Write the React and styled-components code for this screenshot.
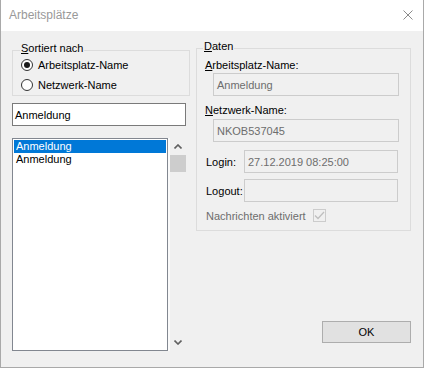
import React from "react";
import styled, { createGlobalStyle } from "styled-components";

const GlobalStyle = createGlobalStyle`
  html, body {
    margin: 0;
    padding: 0;
    background: #ffffff;
  }
  * {
    box-sizing: border-box;
  }
`;

const Window = styled.div`
  width: 424px;
  height: 368px;
  border: 1px solid #a9a9a9;
  border-top: none;
  display: flex;
  flex-direction: column;
  font-family: "Liberation Sans", Arial, sans-serif;
  font-size: 11px;
  color: #000;
`;

const TitleBar = styled.div`
  height: 31px;
  flex: none;
  background: #ffffff;
  display: flex;
  align-items: center;
  justify-content: space-between;
  padding: 0 10px 1px 8px;
  font-size: 12px;
  color: #999999;
`;

const Body = styled.div`
  flex: 1;
  background: #f0f0f0;
  display: flex;
  gap: 6px;
  padding: 0 12px 0 11px;
`;

const LeftColumn = styled.div`
  width: 178px;
  display: flex;
  flex-direction: column;
  padding-top: 19px;
  padding-bottom: 16px;
`;

const RightColumn = styled.div`
  width: 215px;
  display: flex;
  flex-direction: column;
  padding-top: 17px;
`;

const GroupBox = styled.div`
  position: relative;
  border: 1px solid #dcdcdc;
  height: ${(p) => p.$height}px;
`;

const Legend = styled.span`
  position: absolute;
  top: -9px;
  left: ${(p) => p.$left}px;
  line-height: 13px;
  padding: 0 1px;
  background: #f0f0f0;
`;

const Key = styled.span`
  text-decoration: underline;
  text-underline-offset: 1px;
`;

const RadioList = styled.div`
  display: flex;
  flex-direction: column;
  padding: 4px 0 0 8px;
`;

const RadioRow = styled.label`
  display: flex;
  align-items: center;
  height: 20px;
  gap: 5px;
`;

const RadioCircle = styled.span`
  width: 12px;
  height: 12px;
  border-radius: 50%;
  border: 1px solid #333333;
  background: #ffffff;
  display: flex;
  align-items: center;
  justify-content: center;
  &::after {
    content: "";
    width: 6px;
    height: 6px;
    border-radius: 50%;
    background: ${(p) => (p.$checked ? "#1a1a1a" : "transparent")};
  }
`;

const SearchInput = styled.div`
  margin-top: 7px;
  width: 174px;
  height: 23px;
  border: 1px solid #7a7a7a;
  background: #ffffff;
  display: flex;
  align-items: center;
  padding-left: 2px;
`;

const ListArea = styled.div`
  margin-top: 12px;
  width: 174px;
  flex: 1;
  display: flex;
`;

const ListBox = styled.div`
  width: 156px;
  border: 1px solid #828790;
  background: #ffffff;
  padding: 1px;
`;

const ListItem = styled.div`
  height: 13px;
  line-height: 13px;
  padding-left: 2px;
  background: ${(p) => (p.$selected ? "#0078d7" : "transparent")};
  color: ${(p) => (p.$selected ? "#ffffff" : "#000000")};
`;

const ScrollBar = styled.div`
  width: 18px;
  border-left: 2px solid #fafafa;
  background: #f0f0f0;
  display: flex;
  flex-direction: column;
`;

const ScrollArrow = styled.div`
  height: 17px;
  display: flex;
  align-items: center;
  justify-content: center;
`;

const Thumb = styled.div`
  height: 17px;
  background: #cdcdcd;
`;

const Track = styled.div`
  flex: 1;
`;

const DataGroup = styled.div`
  display: flex;
  flex-direction: column;
  padding: 10px 11px 0 8px;
`;

const FieldLabel = styled.div`
  line-height: 13px;
  margin-top: ${(p) => p.$top || 0}px;
`;

const DisabledField = styled.div`
  height: 23px;
  border: 1px solid #cccccc;
  background: #f0f0f0;
  color: #6d6d6d;
  display: flex;
  align-items: center;
  padding-left: 3px;
  margin-top: ${(p) => p.$top || 0}px;
  margin-left: ${(p) => p.$indent || 0}px;
  flex: ${(p) => (p.$grow ? 1 : "none")};
`;

const FieldRow = styled.div`
  display: flex;
  align-items: center;
  margin-top: ${(p) => p.$top}px;
  padding-right: 1px;
`;

const RowLabel = styled.div`
  width: 39px;
  padding-left: 1px;
`;

const CheckRow = styled.div`
  display: flex;
  align-items: center;
  gap: 7px;
  margin-top: 7px;
  padding-left: 1px;
  color: #6d6d6d;
`;

const CheckBox = styled.span`
  width: 13px;
  height: 13px;
  border: 1px solid #cccccc;
  background: #f0f0f0;
  display: flex;
  align-items: center;
  justify-content: center;
`;

const OkButton = styled.button`
  margin-top: auto;
  margin-bottom: 24px;
  align-self: flex-end;
  width: 89px;
  height: 22px;
  border: 1px solid #adadad;
  background: #e1e1e1;
  font-family: "Liberation Sans", Arial, sans-serif;
  font-size: 11px;
  color: #000;
  padding: 0;
`;

function Chevron({ up }) {
  return (
    <svg width="8" height="5" viewBox="0 0 8 5">
      <path
        d={up ? "M0.5 4.5 L4 1 L7.5 4.5" : "M0.5 0.5 L4 4 L7.5 0.5"}
        fill="none"
        stroke="#606060"
        strokeWidth="1.6"
      />
    </svg>
  );
}

export default function App() {
  return (
    <>
      <GlobalStyle />
      <Window>
        <TitleBar>
          <span>Arbeitsplätze</span>
          <svg width="10" height="10" viewBox="0 0 10 10">
            <path d="M0.5 0.5 L9.5 9.5 M9.5 0.5 L0.5 9.5" stroke="#8a8a8a" strokeWidth="1" />
          </svg>
        </TitleBar>
        <Body>
          <LeftColumn>
            <GroupBox $height={46}>
              <Legend $left={7}>
                <Key>S</Key>ortiert nach
              </Legend>
              <RadioList>
                <RadioRow>
                  <RadioCircle $checked />
                  Arbeitsplatz-Name
                </RadioRow>
                <RadioRow>
                  <RadioCircle />
                  Netzwerk-Name
                </RadioRow>
              </RadioList>
            </GroupBox>
            <SearchInput>Anmeldung</SearchInput>
            <ListArea>
              <ListBox>
                <ListItem $selected>Anmeldung</ListItem>
                <ListItem>Anmeldung</ListItem>
              </ListBox>
              <ScrollBar>
                <ScrollArrow>
                  <Chevron up />
                </ScrollArrow>
                <Thumb />
                <Track />
                <ScrollArrow>
                  <Chevron />
                </ScrollArrow>
              </ScrollBar>
            </ListArea>
          </LeftColumn>
          <RightColumn>
            <GroupBox $height={183}>
              <Legend $left={6}>
                <Key>D</Key>aten
              </Legend>
              <DataGroup>
                <FieldLabel>
                  <Key>A</Key>rbeitsplatz-Name:
                </FieldLabel>
                <DisabledField $top={1} $indent={8}>
                  Anmeldung
                </DisabledField>
                <FieldLabel $top={8}>
                  <Key>N</Key>etzwerk-Name:
                </FieldLabel>
                <DisabledField $top={2} $indent={8}>
                  NKOB537045
                </DisabledField>
                <FieldRow $top={8}>
                  <RowLabel>
                    Lo<Key>g</Key>in:
                  </RowLabel>
                  <DisabledField $grow>27.12.2019 08:25:00</DisabledField>
                </FieldRow>
                <FieldRow $top={6}>
                  <RowLabel>
                    Lo<Key>g</Key>out:
                  </RowLabel>
                  <DisabledField $grow />
                </FieldRow>
                <CheckRow>
                  Nachrichten aktiviert
                  <CheckBox>
                    <svg width="11" height="9" viewBox="0 0 11 9">
                      <path d="M1 4.5 L4 7.5 L10 1" fill="none" stroke="#bfbfbf" strokeWidth="1.3" />
                    </svg>
                  </CheckBox>
                </CheckRow>
              </DataGroup>
            </GroupBox>
            <OkButton>OK</OkButton>
          </RightColumn>
        </Body>
      </Window>
    </>
  );
}
